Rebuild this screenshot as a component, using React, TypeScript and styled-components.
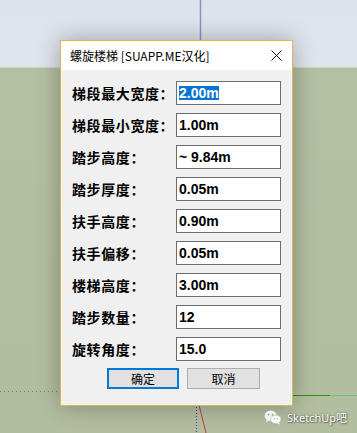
import React from "react";
import styled, { createGlobalStyle } from "styled-components";

const fields = [
  { label: "梯段最大宽度：", value: "2.00m", selected: true },
  { label: "梯段最小宽度：", value: "1.00m" },
  { label: "踏步高度：", value: "~ 9.84m" },
  { label: "踏步厚度：", value: "0.05m" },
  { label: "扶手高度：", value: "0.90m" },
  { label: "扶手偏移：", value: "0.05m" },
  { label: "楼梯高度：", value: "3.00m" },
  { label: "踏步数量：", value: "12" },
  { label: "旋转角度：", value: "15.0" },
];

export default function App() {
  return (
    <>
      <GlobalStyle />
      <Scene>
        {/* sketchup axes behind the dialog */}
        <Axes width="357" height="433" viewBox="0 0 357 433">
          <line x1="200.5" y1="0" x2="200.5" y2="40" stroke="#8f8fd4" strokeWidth="1.5" />
          <line x1="0" y1="391.5" x2="60" y2="391.5" stroke="#2fb52f" strokeDasharray="1 3" />
          <line x1="292" y1="395.5" x2="330" y2="395.5" stroke="#1f9a1f" />
          <line x1="330" y1="395.5" x2="357" y2="395.5" stroke="#72c072" />
          <line x1="196.5" y1="401" x2="196.5" y2="433" stroke="#3040d8" strokeDasharray="1 2" />
          <line x1="198" y1="401" x2="206" y2="433" stroke="#c23a3a" />
        </Axes>

        <Dialog>
          <TitleBar>
            <Title>螺旋楼梯 [SUAPP.ME汉化]</Title>
            <CloseButton>
              <svg width="11" height="11" viewBox="0 0 11 11">
                <path d="M0.5 0.5L10.5 10.5M10.5 0.5L0.5 10.5" stroke="#111" strokeWidth="1" />
              </svg>
            </CloseButton>
          </TitleBar>

          <Body>
            {fields.map((f) => (
              <React.Fragment key={f.label}>
                <Label>{f.label}</Label>
                <Field>
                  {f.selected ? <Selected>{f.value}</Selected> : f.value}
                </Field>
              </React.Fragment>
            ))}
            <Buttons>
              <Button $primary>确定</Button>
              <Button>取消</Button>
            </Buttons>
          </Body>
        </Dialog>

        <Watermark>
          <svg width="18" height="15" viewBox="0 0 19 16">
            <ellipse cx="7" cy="6" rx="6.5" ry="5.5" fill="#f2f2f2" />
            <path d="M3 10l-1 3 3.5-2z" fill="#f2f2f2" />
            <ellipse cx="12.5" cy="10" rx="5.5" ry="4.6" fill="#fafafa" stroke="#b9bfa8" strokeWidth="0.8" />
            <path d="M15.5 13.5l1.5 2-3.2-1.2z" fill="#fafafa" />
            <circle cx="4.8" cy="5" r="0.9" fill="#9aa08a" />
            <circle cx="9" cy="5" r="0.9" fill="#9aa08a" />
            <circle cx="10.8" cy="9.4" r="0.7" fill="#9aa08a" />
            <circle cx="14.2" cy="9.4" r="0.7" fill="#9aa08a" />
          </svg>
          <span>SketchUp吧</span>
        </Watermark>
      </Scene>
    </>
  );
}

const GlobalStyle = createGlobalStyle`
  body {
    margin: 0;
    overflow: hidden;
    font-family: "Noto Sans CJK SC", "Noto Sans", sans-serif;
  }
`;

const Scene = styled.div`
  position: relative;
  width: 357px;
  height: 433px;
  overflow: hidden;
  background: linear-gradient(
    to bottom,
    #dee3eb 0,
    #e0e4ec 67px,
    #b5bfa2 68px,
    #b3bd9f 100%
  );
`;

const Axes = styled.svg`
  position: absolute;
  left: 0;
  top: 0;
`;

const Dialog = styled.div`
  position: absolute;
  left: 60px;
  top: 40px;
  width: 233px;
  box-sizing: border-box;
  border: 1px solid #d8bb4c;
  display: flex;
  flex-direction: column;
  box-shadow: 0 0 22px rgba(0, 0, 0, 0.3);
`;

const TitleBar = styled.div`
  height: 29px;
  background: #ffffff;
  display: flex;
  align-items: center;
  justify-content: space-between;
  padding-left: 9px;
`;

const Title = styled.div`
  font-family: "Noto Sans CJK SC", sans-serif;
  font-size: 12px;
  color: #000;
  line-height: 1;
`;

const CloseButton = styled.div`
  width: 30px;
  height: 29px;
  display: flex;
  align-items: center;
  justify-content: center;
  margin-right: 1px;
`;

const Body = styled.div`
  background: #f0f0f0;
  padding: 11px 10px 12px 11px;
  display: grid;
  grid-template-columns: 104px 105px;
  grid-auto-rows: 24px;
  row-gap: 8px;
`;

const Label = styled.div`
  font-family: "Noto Sans CJK SC", sans-serif;
  font-weight: 700;
  font-size: 14px;
  letter-spacing: 0.6px;
  color: #000;
  display: flex;
  align-items: center;
  white-space: nowrap;
`;

const Field = styled.div`
  box-sizing: border-box;
  height: 24px;
  border: 1px solid #6e6e6e;
  background: #fff;
  padding-left: 2px;
  display: flex;
  align-items: center;
  font-family: "Liberation Sans", Arial, sans-serif;
  font-weight: 700;
  font-size: 14px;
  color: #000;
  white-space: pre;
`;

const Selected = styled.span`
  background: #0a74d4;
  color: #fff;
  line-height: 14px;
`;

const Buttons = styled.div`
  grid-column: 1 / span 2;
  height: 21px;
  margin-top: -1px;
  padding-left: 35px;
  display: flex;
  gap: 8px;
`;

const Button = styled.div<{ $primary?: boolean }>`
  box-sizing: border-box;
  width: ${(p) => (p.$primary ? "72px" : "73px")};
  height: 21px;
  background: #e1e1e1;
  border: ${(p) => (p.$primary ? "2px solid #0078d7" : "1px solid #adadad")};
  display: flex;
  align-items: center;
  justify-content: center;
  font-family: "Noto Sans CJK SC", sans-serif;
  font-size: 12px;
  color: #000;
`;

const Watermark = styled.div`
  position: absolute;
  right: 10px;
  bottom: 8px;
  display: flex;
  align-items: center;
  gap: 5px;
  font-family: "Noto Sans", "Noto Sans CJK SC", sans-serif;
  font-size: 11px;
  color: #ffffff;
  text-shadow: 0 0 2px rgba(0, 0, 0, 0.55), 1px 1px 1px rgba(0, 0, 0, 0.35);
`;
